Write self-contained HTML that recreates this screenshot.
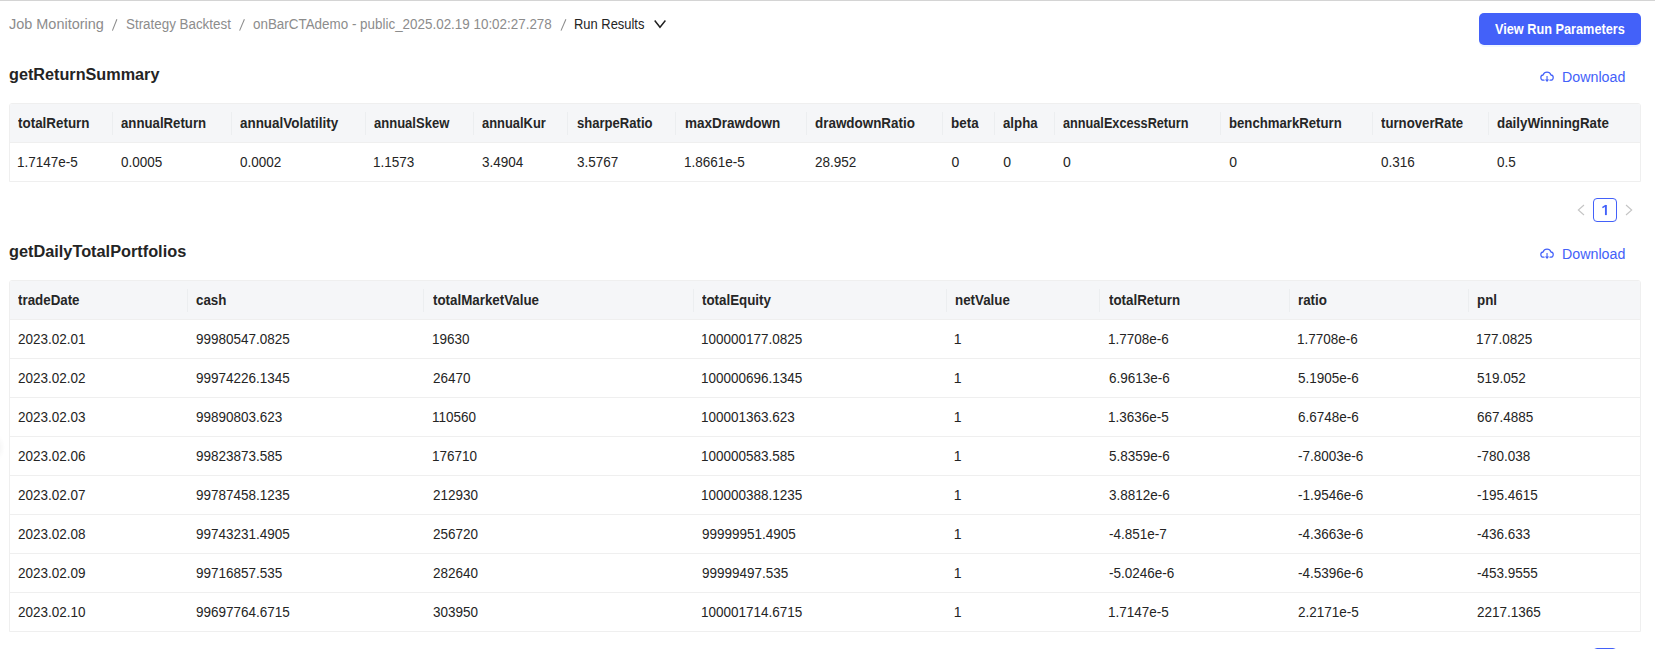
<!DOCTYPE html>
<html><head><meta charset="utf-8"><title>Run Results</title>
<style>
html,body{margin:0;padding:0;background:#fff;}
body{width:1655px;height:649px;position:relative;overflow:hidden;font-family:"Liberation Sans",sans-serif;font-size:14px;color:#242424;}
body>div,body>svg,body>span{position:absolute;}
span{line-height:1;white-space:nowrap;transform-origin:0 0;}
</style></head><body>
<div style="left:-9px;top:435px;width:14px;height:25px;border-radius:50%;background:radial-gradient(closest-side,rgba(0,0,0,0.045),rgba(0,0,0,0))"></div>
<div style="left:0px;top:0px;width:1655px;height:1px;background:#d4d4d4"></div>
<div style="left:9px;top:103px;width:1632px;height:79px;box-sizing:border-box;border:1px solid #efefef;border-radius:3px 3px 0 0;"></div>
<div style="left:10px;top:104px;width:1630px;height:38px;background:#f5f6f8;border-radius:2px 2px 0 0"></div>
<div style="left:10px;top:142px;width:1630px;height:1px;background:#efefef"></div>
<div style="left:112px;top:112px;width:1px;height:23px;background:#eceef0"></div>
<div style="left:231px;top:112px;width:1px;height:23px;background:#eceef0"></div>
<div style="left:365px;top:112px;width:1px;height:23px;background:#eceef0"></div>
<div style="left:473px;top:112px;width:1px;height:23px;background:#eceef0"></div>
<div style="left:567px;top:112px;width:1px;height:23px;background:#eceef0"></div>
<div style="left:675px;top:112px;width:1px;height:23px;background:#eceef0"></div>
<div style="left:806px;top:112px;width:1px;height:23px;background:#eceef0"></div>
<div style="left:942px;top:112px;width:1px;height:23px;background:#eceef0"></div>
<div style="left:994px;top:112px;width:1px;height:23px;background:#eceef0"></div>
<div style="left:1054px;top:112px;width:1px;height:23px;background:#eceef0"></div>
<div style="left:1220px;top:112px;width:1px;height:23px;background:#eceef0"></div>
<div style="left:1372px;top:112px;width:1px;height:23px;background:#eceef0"></div>
<div style="left:1488px;top:112px;width:1px;height:23px;background:#eceef0"></div>
<div style="left:9px;top:280px;width:1632px;height:352px;box-sizing:border-box;border:1px solid #efefef;border-radius:3px 3px 0 0;"></div>
<div style="left:10px;top:281px;width:1630px;height:38px;background:#f5f6f8;border-radius:2px 2px 0 0"></div>
<div style="left:10px;top:319px;width:1630px;height:1px;background:#efefef"></div>
<div style="left:10px;top:358px;width:1630px;height:1px;background:#efefef"></div>
<div style="left:10px;top:397px;width:1630px;height:1px;background:#efefef"></div>
<div style="left:10px;top:436px;width:1630px;height:1px;background:#efefef"></div>
<div style="left:10px;top:475px;width:1630px;height:1px;background:#efefef"></div>
<div style="left:10px;top:514px;width:1630px;height:1px;background:#efefef"></div>
<div style="left:10px;top:553px;width:1630px;height:1px;background:#efefef"></div>
<div style="left:10px;top:592px;width:1630px;height:1px;background:#efefef"></div>
<div style="left:187px;top:289px;width:1px;height:23px;background:#eceef0"></div>
<div style="left:423px;top:289px;width:1px;height:23px;background:#eceef0"></div>
<div style="left:693px;top:289px;width:1px;height:23px;background:#eceef0"></div>
<div style="left:946px;top:289px;width:1px;height:23px;background:#eceef0"></div>
<div style="left:1099px;top:289px;width:1px;height:23px;background:#eceef0"></div>
<div style="left:1289px;top:289px;width:1px;height:23px;background:#eceef0"></div>
<div style="left:1468px;top:289px;width:1px;height:23px;background:#eceef0"></div>
<div style="left:1479px;top:13px;width:162px;height:32px;background:#4361f9;border-radius:5px;box-shadow:0 2px 0 rgba(5,95,255,0.06)"></div>
<svg style="left:0;top:0" width="700" height="40"><path d="M116.9 19.3 L112.4 30.6" stroke="#8c8c8c" stroke-width="1.05"/></svg>
<svg style="left:0;top:0" width="700" height="40"><path d="M244.4 19.3 L239.6 30.6" stroke="#8c8c8c" stroke-width="1.05"/></svg>
<svg style="left:0;top:0" width="700" height="40"><path d="M565.9 19.3 L561.0 30.6" stroke="#8c8c8c" stroke-width="1.05"/></svg>
<svg style="left:653px;top:18px" width="15" height="12" viewBox="0 0 15 12"><path d="M1.7 2.5 L7.0 9.3 L12.4 2.5" fill="none" stroke="#1f1f1f" stroke-width="1.45"/></svg>
<svg style="left:1540px;top:70.15px" width="15" height="14" viewBox="0 0 16 14" preserveAspectRatio="none"><path d="M4.3 10.2 H3.5 A2.6 2.6 0 0 1 3.291 5.008 A4.5 4.5 0 0 1 11.709 5.008 A2.6 2.6 0 0 1 11.5 10.2 H10.7" fill="none" stroke="#4361f9" stroke-width="1.3" stroke-linecap="round"/><path d="M7.5 5.9 V9.9" stroke="#4361f9" stroke-width="1.2"/><path d="M5.3 9.5 L9.7 9.5 L7.5 12.0 Z" fill="#4361f9"/></svg>
<svg style="left:1540px;top:247.15px" width="15" height="14" viewBox="0 0 16 14" preserveAspectRatio="none"><path d="M4.3 10.2 H3.5 A2.6 2.6 0 0 1 3.291 5.008 A4.5 4.5 0 0 1 11.709 5.008 A2.6 2.6 0 0 1 11.5 10.2 H10.7" fill="none" stroke="#4361f9" stroke-width="1.3" stroke-linecap="round"/><path d="M7.5 5.9 V9.9" stroke="#4361f9" stroke-width="1.2"/><path d="M5.3 9.5 L9.7 9.5 L7.5 12.0 Z" fill="#4361f9"/></svg>
<div style="left:1593px;top:198px;width:24px;height:24px;box-sizing:border-box;border:1px solid #4361f9;border-radius:4px"></div>
<svg style="left:1593px;top:198px" width="24" height="24" viewBox="0 0 24 24"><path d="M12.9 7 V17.1" stroke="#4361f9" stroke-width="1.9"/><path d="M12.9 7.3 L9.4 9.6" stroke="#4361f9" stroke-width="1.5"/></svg>
<svg style="left:1576px;top:204px" width="10" height="12" viewBox="0 0 10 12"><path d="M8 1 L2.3 6 L8 11" fill="none" stroke="#c4c4c4" stroke-width="1.1"/></svg>
<svg style="left:1624px;top:204px" width="10" height="12" viewBox="0 0 10 12"><path d="M2 1 L7.7 6 L2 11" fill="none" stroke="#c4c4c4" stroke-width="1.1"/></svg>
<div style="left:1593px;top:648px;width:24px;height:24px;box-sizing:border-box;border:1px solid #4361f9;border-radius:4px"></div>
<svg style="left:1593px;top:648px" width="24" height="24" viewBox="0 0 24 24"><path d="M12.9 7 V17.1" stroke="#4361f9" stroke-width="1.9"/><path d="M12.9 7.3 L9.4 9.6" stroke="#4361f9" stroke-width="1.5"/></svg>
<svg style="left:1576px;top:654px" width="10" height="12" viewBox="0 0 10 12"><path d="M8 1 L2.3 6 L8 11" fill="none" stroke="#c4c4c4" stroke-width="1.1"/></svg>
<svg style="left:1624px;top:654px" width="10" height="12" viewBox="0 0 10 12"><path d="M2 1 L7.7 6 L2 11" fill="none" stroke="#c4c4c4" stroke-width="1.1"/></svg>
<span style="left:9.00px;top:17.15px;color:#8c8c8c;transform:scaleX(1.0325);">Job Monitoring</span>
<span style="left:125.60px;top:17.15px;color:#8c8c8c;transform:scaleX(0.9560);">Strategy Backtest</span>
<span style="left:253.20px;top:17.15px;color:#8c8c8c;transform:scaleX(0.9581);">onBarCTAdemo - public_2025.02.19 10:02:27.278</span>
<span style="left:574.48px;top:17.15px;transform:scaleX(0.9235);">Run Results</span>
<span style="left:9.35px;top:66.66px;font-size:16px;font-weight:700;transform:scaleX(1.0129);">getReturnSummary</span>
<span style="left:9.35px;top:243.66px;font-size:16px;font-weight:700;transform:scaleX(1.0187);">getDailyTotalPortfolios</span>
<span style="left:1494.80px;top:22.15px;font-weight:700;color:#ffffff;transform:scaleX(0.9082);">View Run Parameters</span>
<span style="left:1561.98px;top:70.15px;color:#4361f9;transform:scaleX(1.0169);">Download</span>
<span style="left:1561.98px;top:247.15px;color:#4361f9;transform:scaleX(1.0169);">Download</span>
<span style="left:18.40px;top:116.15px;font-weight:700;color:#262626;transform:scaleX(0.9580);">totalReturn</span>
<span style="left:17.44px;top:154.85px;transform:scaleX(0.9640);">1.7147e-5</span>
<span style="left:121.30px;top:116.15px;font-weight:700;color:#262626;transform:scaleX(0.9434);">annualReturn</span>
<span style="left:121.30px;top:154.85px;transform:scaleX(0.9640);">0.0005</span>
<span style="left:239.70px;top:116.15px;font-weight:700;color:#262626;transform:scaleX(0.9587);">annualVolatility</span>
<span style="left:239.70px;top:154.85px;transform:scaleX(0.9640);">0.0002</span>
<span style="left:374.30px;top:116.15px;font-weight:700;color:#262626;transform:scaleX(0.9306);">annualSkew</span>
<span style="left:373.34px;top:154.85px;transform:scaleX(0.9640);">1.1573</span>
<span style="left:482.10px;top:116.15px;font-weight:700;color:#262626;transform:scaleX(0.9215);">annualKur</span>
<span style="left:482.10px;top:154.85px;transform:scaleX(0.9640);">3.4904</span>
<span style="left:576.80px;top:116.15px;font-weight:700;color:#262626;transform:scaleX(0.9333);">sharpeRatio</span>
<span style="left:576.80px;top:154.85px;transform:scaleX(0.9640);">3.5767</span>
<span style="left:684.60px;top:116.15px;font-weight:700;color:#262626;transform:scaleX(0.9649);">maxDrawdown</span>
<span style="left:683.64px;top:154.85px;transform:scaleX(0.9640);">1.8661e-5</span>
<span style="left:815.00px;top:116.15px;font-weight:700;color:#262626;transform:scaleX(0.9588);">drawdownRatio</span>
<span style="left:815.00px;top:154.85px;transform:scaleX(0.9640);">28.952</span>
<span style="left:951.40px;top:116.15px;font-weight:700;color:#262626;transform:scaleX(0.9586);">beta</span>
<span style="left:951.40px;top:154.85px;">0</span>
<span style="left:1003.30px;top:116.15px;font-weight:700;color:#262626;transform:scaleX(0.9462);">alpha</span>
<span style="left:1003.30px;top:154.85px;">0</span>
<span style="left:1063.00px;top:116.15px;font-weight:700;color:#262626;transform:scaleX(0.9062);">annualExcessReturn</span>
<span style="left:1063.00px;top:154.85px;">0</span>
<span style="left:1229.30px;top:116.15px;font-weight:700;color:#262626;transform:scaleX(0.9408);">benchmarkReturn</span>
<span style="left:1229.30px;top:154.85px;">0</span>
<span style="left:1381.20px;top:116.15px;font-weight:700;color:#262626;transform:scaleX(0.9434);">turnoverRate</span>
<span style="left:1381.20px;top:154.85px;transform:scaleX(0.9640);">0.316</span>
<span style="left:1497.20px;top:116.15px;font-weight:700;color:#262626;transform:scaleX(0.9537);">dailyWinningRate</span>
<span style="left:1497.20px;top:154.85px;transform:scaleX(0.9640);">0.5</span>
<span style="left:18.40px;top:293.35px;font-weight:700;color:#262626;transform:scaleX(0.9530);">tradeDate</span>
<span style="left:196.00px;top:293.35px;font-weight:700;color:#262626;transform:scaleX(0.9530);">cash</span>
<span style="left:432.60px;top:293.35px;font-weight:700;color:#262626;transform:scaleX(0.9530);">totalMarketValue</span>
<span style="left:702.00px;top:293.35px;font-weight:700;color:#262626;transform:scaleX(0.9530);">totalEquity</span>
<span style="left:954.70px;top:293.35px;font-weight:700;color:#262626;transform:scaleX(0.9530);">netValue</span>
<span style="left:1108.50px;top:293.35px;font-weight:700;color:#262626;transform:scaleX(0.9530);">totalReturn</span>
<span style="left:1297.80px;top:293.35px;font-weight:700;color:#262626;transform:scaleX(0.9530);">ratio</span>
<span style="left:1476.50px;top:293.35px;font-weight:700;color:#262626;transform:scaleX(0.9530);">pnl</span>
<span style="left:18.40px;top:332.35px;transform:scaleX(0.9640);">2023.02.01</span>
<span style="left:196.00px;top:332.35px;transform:scaleX(0.9640);">99980547.0825</span>
<span style="left:431.64px;top:332.35px;transform:scaleX(0.9640);">19630</span>
<span style="left:701.04px;top:332.35px;transform:scaleX(0.9640);">100000177.0825</span>
<span style="left:953.70px;top:332.35px;">1</span>
<span style="left:1107.54px;top:332.35px;transform:scaleX(0.9640);">1.7708e-6</span>
<span style="left:1296.84px;top:332.35px;transform:scaleX(0.9640);">1.7708e-6</span>
<span style="left:1475.54px;top:332.35px;transform:scaleX(0.9640);">177.0825</span>
<span style="left:18.40px;top:371.35px;transform:scaleX(0.9640);">2023.02.02</span>
<span style="left:196.00px;top:371.35px;transform:scaleX(0.9640);">99974226.1345</span>
<span style="left:432.60px;top:371.35px;transform:scaleX(0.9640);">26470</span>
<span style="left:701.04px;top:371.35px;transform:scaleX(0.9640);">100000696.1345</span>
<span style="left:953.70px;top:371.35px;">1</span>
<span style="left:1108.50px;top:371.35px;transform:scaleX(0.9640);">6.9613e-6</span>
<span style="left:1297.80px;top:371.35px;transform:scaleX(0.9640);">5.1905e-6</span>
<span style="left:1476.50px;top:371.35px;transform:scaleX(0.9640);">519.052</span>
<span style="left:18.40px;top:410.35px;transform:scaleX(0.9640);">2023.02.03</span>
<span style="left:196.00px;top:410.35px;transform:scaleX(0.9640);">99890803.623</span>
<span style="left:431.64px;top:410.35px;transform:scaleX(0.9640);">110560</span>
<span style="left:701.04px;top:410.35px;transform:scaleX(0.9640);">100001363.623</span>
<span style="left:953.70px;top:410.35px;">1</span>
<span style="left:1107.54px;top:410.35px;transform:scaleX(0.9640);">1.3636e-5</span>
<span style="left:1297.80px;top:410.35px;transform:scaleX(0.9640);">6.6748e-6</span>
<span style="left:1476.50px;top:410.35px;transform:scaleX(0.9640);">667.4885</span>
<span style="left:18.40px;top:449.35px;transform:scaleX(0.9640);">2023.02.06</span>
<span style="left:196.00px;top:449.35px;transform:scaleX(0.9640);">99823873.585</span>
<span style="left:431.64px;top:449.35px;transform:scaleX(0.9640);">176710</span>
<span style="left:701.04px;top:449.35px;transform:scaleX(0.9640);">100000583.585</span>
<span style="left:953.70px;top:449.35px;">1</span>
<span style="left:1108.50px;top:449.35px;transform:scaleX(0.9640);">5.8359e-6</span>
<span style="left:1297.80px;top:449.35px;transform:scaleX(0.9640);">-7.8003e-6</span>
<span style="left:1476.50px;top:449.35px;transform:scaleX(0.9640);">-780.038</span>
<span style="left:18.40px;top:488.35px;transform:scaleX(0.9640);">2023.02.07</span>
<span style="left:196.00px;top:488.35px;transform:scaleX(0.9640);">99787458.1235</span>
<span style="left:432.60px;top:488.35px;transform:scaleX(0.9640);">212930</span>
<span style="left:701.04px;top:488.35px;transform:scaleX(0.9640);">100000388.1235</span>
<span style="left:953.70px;top:488.35px;">1</span>
<span style="left:1108.50px;top:488.35px;transform:scaleX(0.9640);">3.8812e-6</span>
<span style="left:1297.80px;top:488.35px;transform:scaleX(0.9640);">-1.9546e-6</span>
<span style="left:1476.50px;top:488.35px;transform:scaleX(0.9640);">-195.4615</span>
<span style="left:18.40px;top:527.35px;transform:scaleX(0.9640);">2023.02.08</span>
<span style="left:196.00px;top:527.35px;transform:scaleX(0.9640);">99743231.4905</span>
<span style="left:432.60px;top:527.35px;transform:scaleX(0.9640);">256720</span>
<span style="left:702.00px;top:527.35px;transform:scaleX(0.9640);">99999951.4905</span>
<span style="left:953.70px;top:527.35px;">1</span>
<span style="left:1108.50px;top:527.35px;transform:scaleX(0.9640);">-4.851e-7</span>
<span style="left:1297.80px;top:527.35px;transform:scaleX(0.9640);">-4.3663e-6</span>
<span style="left:1476.50px;top:527.35px;transform:scaleX(0.9640);">-436.633</span>
<span style="left:18.40px;top:566.35px;transform:scaleX(0.9640);">2023.02.09</span>
<span style="left:196.00px;top:566.35px;transform:scaleX(0.9640);">99716857.535</span>
<span style="left:432.60px;top:566.35px;transform:scaleX(0.9640);">282640</span>
<span style="left:702.00px;top:566.35px;transform:scaleX(0.9640);">99999497.535</span>
<span style="left:953.70px;top:566.35px;">1</span>
<span style="left:1108.50px;top:566.35px;transform:scaleX(0.9640);">-5.0246e-6</span>
<span style="left:1297.80px;top:566.35px;transform:scaleX(0.9640);">-4.5396e-6</span>
<span style="left:1476.50px;top:566.35px;transform:scaleX(0.9640);">-453.9555</span>
<span style="left:18.40px;top:605.35px;transform:scaleX(0.9640);">2023.02.10</span>
<span style="left:196.00px;top:605.35px;transform:scaleX(0.9640);">99697764.6715</span>
<span style="left:432.60px;top:605.35px;transform:scaleX(0.9640);">303950</span>
<span style="left:701.04px;top:605.35px;transform:scaleX(0.9640);">100001714.6715</span>
<span style="left:953.70px;top:605.35px;">1</span>
<span style="left:1107.54px;top:605.35px;transform:scaleX(0.9640);">1.7147e-5</span>
<span style="left:1297.80px;top:605.35px;transform:scaleX(0.9640);">2.2171e-5</span>
<span style="left:1476.50px;top:605.35px;transform:scaleX(0.9640);">2217.1365</span>
</body></html>
